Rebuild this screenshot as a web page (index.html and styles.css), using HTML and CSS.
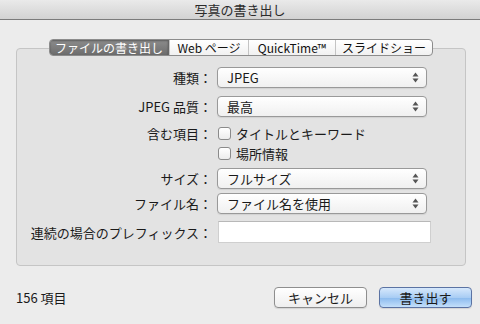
FILE: index.html
```html
<!DOCTYPE html>
<html lang="ja">
<head>
    <meta charset="UTF-8">
    <meta name="viewport" content="width=device-width, initial-scale=1.0">
    <title>写真の書き出し</title>
    <link rel="stylesheet" href="styles.css">
</head>
<body>
    <div class="window">
        <div class="titlebar">写真の書き出し</div>

        <div class="panel">
            <div class="tabs">
                <div class="tab tab-file active">ファイルの書き出し</div>
                <div class="tab tab-web">Web ページ</div>
                <div class="tab tab-qt">QuickTime™</div>
                <div class="tab tab-slide">スライドショー</div>
            </div>

            <div class="form">
                <div class="row row-kind">
                    <div class="label">種類：</div>
                    <div class="popup">JPEG<span class="arrows"><svg width="7" height="11" viewBox="0 0 7 11"><path d="M3.5 0.5 L6.5 4.5 L0.5 4.5 Z M3.5 10.5 L6.5 6.5 L0.5 6.5 Z" fill="#555"/></svg></span></div>
                </div>
                <div class="row row-quality">
                    <div class="label">JPEG 品質：</div>
                    <div class="popup">最高<span class="arrows"><svg width="7" height="11" viewBox="0 0 7 11"><path d="M3.5 0.5 L6.5 4.5 L0.5 4.5 Z M3.5 10.5 L6.5 6.5 L0.5 6.5 Z" fill="#555"/></svg></span></div>
                </div>
                <div class="row row-check1">
                    <div class="label">含む項目：</div>
                    <div class="check"><span class="box"></span>タイトルとキーワード</div>
                </div>
                <div class="row row-check2">
                    <div class="label"></div>
                    <div class="check"><span class="box"></span>場所情報</div>
                </div>
                <div class="row row-size">
                    <div class="label">サイズ：</div>
                    <div class="popup">フルサイズ<span class="arrows"><svg width="7" height="11" viewBox="0 0 7 11"><path d="M3.5 0.5 L6.5 4.5 L0.5 4.5 Z M3.5 10.5 L6.5 6.5 L0.5 6.5 Z" fill="#555"/></svg></span></div>
                </div>
                <div class="row row-name">
                    <div class="label">ファイル名：</div>
                    <div class="popup">ファイル名を使用<span class="arrows"><svg width="7" height="11" viewBox="0 0 7 11"><path d="M3.5 0.5 L6.5 4.5 L0.5 4.5 Z M3.5 10.5 L6.5 6.5 L0.5 6.5 Z" fill="#555"/></svg></span></div>
                </div>
                <div class="row row-prefix">
                    <div class="label">連続の場合のプレフィックス：</div>
                    <div class="field"></div>
                </div>
            </div>
        </div>

        <div class="footer">
            <div class="count">156 項目</div>
            <div class="buttons">
                <button class="btn">キャンセル</button>
                <button class="btn btn-default">書き出す</button>
            </div>
        </div>
    </div>
</body>
</html>
```

FILE: styles.css
```css
* {
    margin: 0;
    padding: 0;
    box-sizing: border-box;
}

body {
    font-family: "Noto Sans CJK JP", "Noto Sans", sans-serif;
    font-size: 13px;
    color: #1a1a1a;
    background: #ececec;
    width: 480px;
    height: 324px;
    overflow: hidden;
}

.window {
    display: flex;
    flex-direction: column;
    height: 100%;
}

.titlebar {
    height: 20px;
    line-height: 19px;
    text-align: center;
    color: #2b2b2b;
    background: linear-gradient(#eaeaea, #d2d2d2);
    border-bottom: 1px solid #7b7b7b;
}

.panel {
    margin: 28px 14px 0 16px;
    height: 218px;
    border: 1px solid #c5c5c5;
    border-radius: 4px;
    background: #e3e3e3;
}

/* segmented tabs sitting on the panel's top edge */
.tabs {
    display: flex;
    width: 384px;
    height: 17px;
    margin: -10px auto 0;
    border: 1px solid #8c8c8c;
    border-radius: 4px;
    background: linear-gradient(#ffffff, #f1f1f1);
    overflow: hidden;
    font-size: 12px;
}

.tab {
    display: flex;
    align-items: center;
    justify-content: center;
    line-height: 15px;
    border-left: 1px solid #c4c4c4;
    color: #111;
}

.tab:first-child {
    border-left: none;
}

.tab-file { width: 119px; }
.tab-web { width: 79px; }
.tab-qt { width: 87px; }
.tab-slide { flex: 1; }

.tab.active {
    color: #fff;
    background: linear-gradient(#8d8d8d, #6c6c6c);
    box-shadow: inset 0 1px 2px rgba(0, 0, 0, 0.35);
    border-right: 1px solid #666;
}

.form {
    display: flex;
    flex-direction: column;
}

.row {
    display: flex;
    align-items: center;
}

.label {
    width: 195px;
    margin-right: 5px;
    text-align: right;
    white-space: nowrap;
}

.row-kind { margin-top: 11px; }
.row-quality { margin-top: 8px; }
.row-check1 { margin-top: 7px; height: 18px; }
.row-check2 { margin-top: 2px; height: 18px; }
.row-size { margin-top: 6px; }
.row-name { margin-top: 4px; }
.row-prefix { margin-top: 7px; }

.popup {
    position: relative;
    width: 210px;
    height: 21px;
    padding-left: 9px;
    line-height: 19px;
    border: 1px solid #999;
    border-radius: 4px;
    background: linear-gradient(#ffffff, #f0f0f0);
    box-shadow: 0 1px 1px rgba(0, 0, 0, 0.08);
}

.arrows {
    position: absolute;
    right: 7px;
    top: 4px;
    display: flex;
}

.check {
    display: flex;
    align-items: center;
    margin-left: 1px;
}

.box {
    width: 13px;
    height: 13px;
    margin-right: 5px;
    border: 1px solid #8a8a8a;
    border-radius: 3px;
    background: linear-gradient(#ffffff, #ececec);
}

.field {
    width: 213px;
    height: 22px;
    margin-left: 1px;
    background: #fff;
    border: 1px solid #cfcfcf;
    border-top-color: #b8b8b8;
}

.footer {
    display: flex;
    align-items: center;
    justify-content: space-between;
    margin-top: 20px;
    height: 22px;
    padding: 0 8px 0 16px;
}

.buttons {
    display: flex;
    gap: 12px;
}

.btn {
    width: 93px;
    height: 21px;
    font-family: inherit;
    font-size: 13px;
    color: #1a1a1a;
    border: 1px solid #8e8e8e;
    border-radius: 4px;
    background: linear-gradient(#ffffff, #eeeeee);
    box-shadow: 0 1px 1px rgba(0, 0, 0, 0.1);
}

.btn-default {
    border-color: #5b73a3;
    background: linear-gradient(#d6e8fc 0%, #a9cdf4 50%, #8fbdef 55%, #c3dffa 100%);
}
```
